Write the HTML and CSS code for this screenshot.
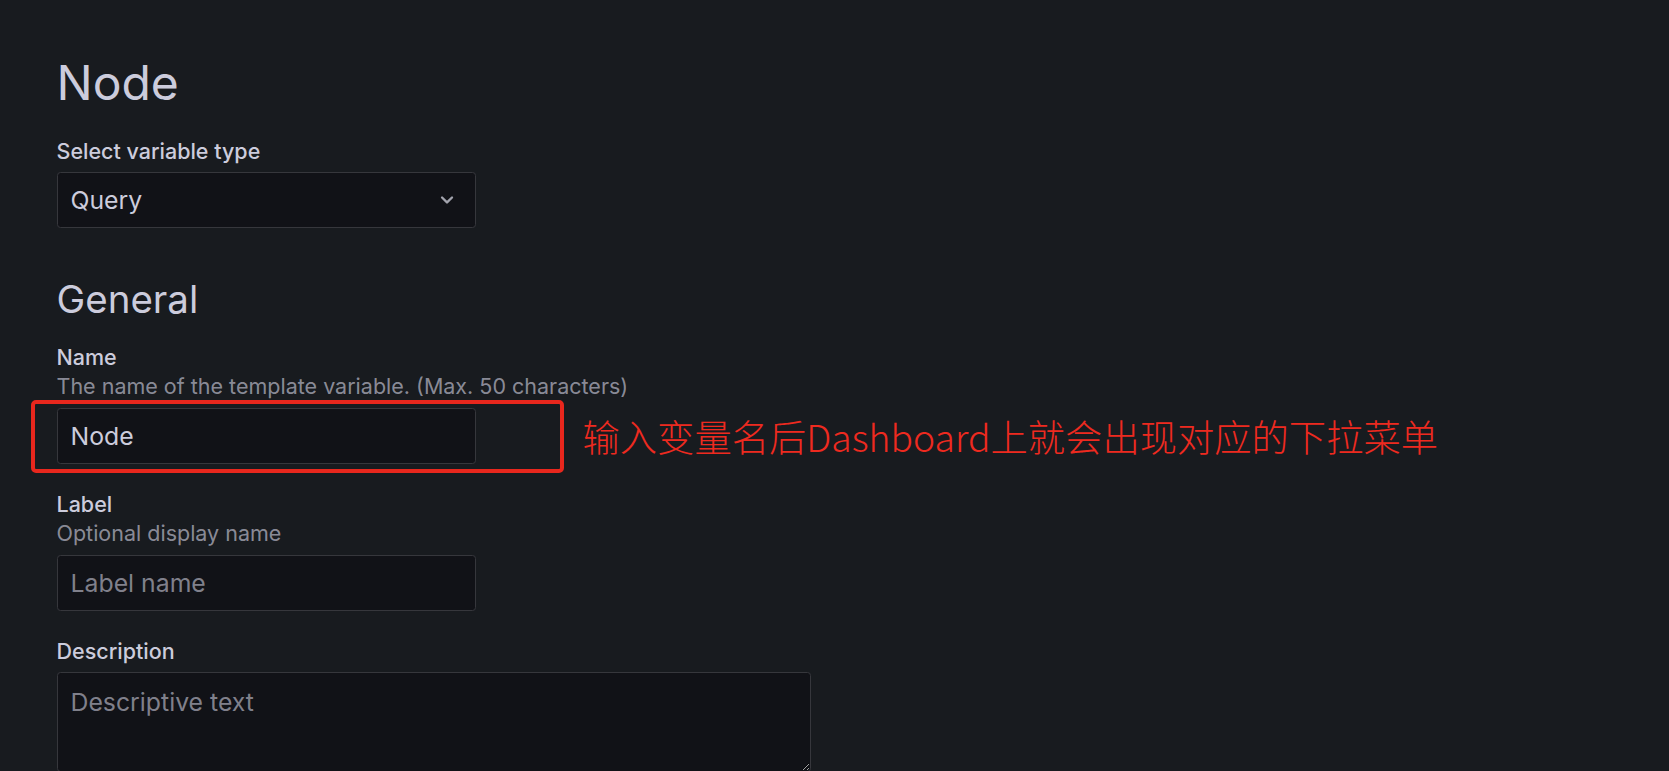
FILE: index.html
```html
<!DOCTYPE html>
<html lang="zh-CN">
<head>
<meta charset="utf-8">
<title>Node - Variable</title>
<link rel="stylesheet" href="styles.css">
</head>
<body>
<div class="page">
  <h1 class="title">Node</h1>

  <div class="field field-type">
    <div class="label">Select variable type</div>
    <div class="select">
      <span class="select-value">Query</span>
      <svg class="chevron" viewBox="0 0 24 24" width="28" height="28" aria-hidden="true">
        <path d="M17,9.17a1,1,0,0,0-1.41,0L12,12.71,8.46,9.17a1,1,0,0,0-1.410,0,1,1,0,0,0,0,1.42l4.24,4.24a1,1,0,0,0,1.42,0L17,10.59A1,1,0,0,0,17,9.17Z" fill="currentColor"/>
      </svg>
    </div>
  </div>

  <h2 class="section-title">General</h2>

  <div class="field">
    <div class="label">Name</div>
    <div class="desc">The name of the template variable. (Max. 50 characters)</div>
    <div class="input-wrap">
      <input class="input" type="text" value="Node">
      <div class="highlight"></div>
      <div class="annotation">输入变量名后Dashboard上就会出现对应的下拉菜单</div>
    </div>
  </div>

  <div class="field">
    <div class="label">Label</div>
    <div class="desc">Optional display name</div>
    <div class="input-wrap">
      <input class="input" type="text" placeholder="Label name">
    </div>
  </div>

  <div class="field">
    <div class="label">Description</div>
    <textarea class="textarea" placeholder="Descriptive text"></textarea>
  </div>
</div>
</body>
</html>
```

FILE: styles.css
```css
html, body {
  margin: 0;
  padding: 0;
  height: 100%;
  overflow: hidden;
  background: #181b1f;
}

body {
  font-family: Inter, "Noto Sans", "Liberation Sans", sans-serif;
  color: #ccccdc;
}

.page {
  padding: 52.7px 0 0 56.5px;
}

.title {
  margin: 0 0 27.3px;
  font-size: 48px;
  line-height: 59px;
  font-weight: 400;
  color: #ccccdc;
}

.section-title {
  margin: 48.8px 0 22.3px;
  font-size: 38.5px;
  line-height: 46px;
  font-weight: 400;
  color: #ccccdc;
}

.field {
  margin-bottom: 28px;
}

.field-type {
  margin-bottom: 0;
}

.label {
  font-size: 21.5px;
  line-height: 25px;
  font-weight: 500;
  color: #ccccdc;
  margin-bottom: 8.2px;
}

.label + .desc {
  margin-top: -3.7px;
}

.desc {
  font-size: 21.5px;
  line-height: 25px;
  font-weight: 400;
  color: rgba(204, 204, 220, 0.65);
  margin-bottom: 9px;
}

.select {
  box-sizing: border-box;
  width: 419px;
  height: 55.5px;
  display: flex;
  align-items: center;
  justify-content: space-between;
  padding: 0 14px 0 13px;
  background: #111217;
  border: 1px solid #36373c;
  border-radius: 3.5px;
}

.select-value {
  font-size: 24.8px;
  line-height: 30px;
  color: #ccccdc;
}

.chevron {
  display: block;
  color: #a3a4ae;
}

.input-wrap {
  position: relative;
  width: 419px;
}

.input {
  display: block;
  box-sizing: border-box;
  width: 419px;
  height: 55.5px;
  margin: 0;
  padding: 0 13px;
  background: #111217;
  border: 1px solid #36373c;
  border-radius: 3.5px;
  font-family: Inter, "Noto Sans", sans-serif;
  font-size: 24.8px;
  line-height: 30px;
  color: #ccccdc;
  outline: none;
}

.input::placeholder,
.textarea::placeholder {
  color: rgba(204, 204, 220, 0.6);
  opacity: 1;
}

.textarea {
  display: block;
  box-sizing: border-box;
  width: 754px;
  height: 100.5px;
  margin: 0;
  padding: 14.5px 13px;
  background: #111217;
  border: 1px solid #36373c;
  border-radius: 3.5px;
  font-family: Inter, "Noto Sans", sans-serif;
  font-size: 24.8px;
  line-height: 30px;
  color: #ccccdc;
  outline: none;
  resize: both;
  color-scheme: dark;
}

/* annotation overlay */
.highlight {
  position: absolute;
  top: -8.4px;
  left: -25.5px;
  right: -88.5px;
  bottom: -9px;
  border: 4px solid #e8271d;
  border-radius: 5px;
  pointer-events: none;
}

.annotation {
  position: absolute;
  top: 0;
  bottom: 0;
  left: 526px;
  display: flex;
  align-items: center;
  white-space: nowrap;
  font-family: "Noto Sans CJK SC", "Noto Sans", sans-serif;
  font-size: 37.3px;
  font-weight: 300;
  color: #ee2a1f;
}
```
